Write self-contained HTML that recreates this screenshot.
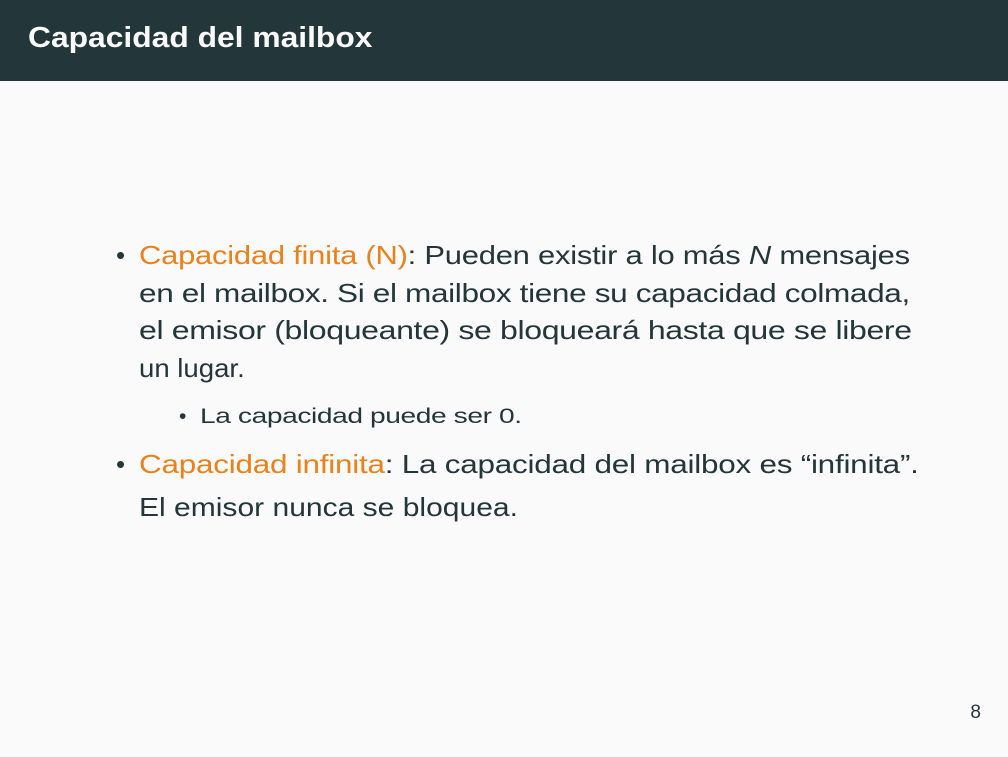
<!DOCTYPE html>
<html><head><meta charset="utf-8"><style>
body{margin:0;width:1008px;height:757px;background:#fafafa;position:relative;overflow:hidden;font-family:"Liberation Sans","DejaVu Sans",sans-serif;color:#23373b}
.hd{position:absolute;left:0;top:0;width:1008px;height:81px;background:#23373b}
.hd span{position:absolute;left:28px;top:22px;font-size:29px;font-weight:bold;color:#fafafa;transform:scaleX(1.096);transform-origin:left;white-space:nowrap}
.l{position:absolute;white-space:nowrap;font-size:26px;line-height:30px;transform-origin:left}
.o{color:#eb811b}
.s{font-size:21px}
.pg{position:absolute;right:27px;top:702px;font-size:19px}
</style></head><body>
<div class="hd"><span>Capacidad del mailbox</span></div>
<div class="l" style="left:116px;top:240px">•</div>
<div class="l" style="left:139px;top:240px;letter-spacing:-0.2px;transform:scaleX(1.19)"><span class="o">Capacidad finita (N)</span>: Pueden existir a lo más <i>N</i> mensajes</div>
<div class="l" style="left:139px;top:278px;letter-spacing:-0.3px;transform:scaleX(1.214)">en el mailbox. Si el mailbox tiene su capacidad colmada,</div>
<div class="l" style="left:139px;top:315px;letter-spacing:-0.3px;transform:scaleX(1.233)">el emisor (bloqueante) se bloqueará hasta que se libere</div>
<div class="l" style="left:139px;top:353px;transform:scaleX(1.06)">un lugar.</div>
<div class="l s" style="left:179px;top:402px">•</div>
<div class="l s" style="left:200px;top:402px;letter-spacing:-0.3px;transform:scaleX(1.34)">La capacidad puede ser 0.</div>
<div class="l" style="left:116px;top:449px">•</div>
<div class="l" style="left:139px;top:449px;letter-spacing:-0.2px;transform:scaleX(1.21)"><span class="o">Capacidad infinita</span>: La capacidad del mailbox es “infinita”.</div>
<div class="l" style="left:139px;top:492px;transform:scaleX(1.155)">El emisor nunca se bloquea.</div>
<div class="pg">8</div>
</body></html>
